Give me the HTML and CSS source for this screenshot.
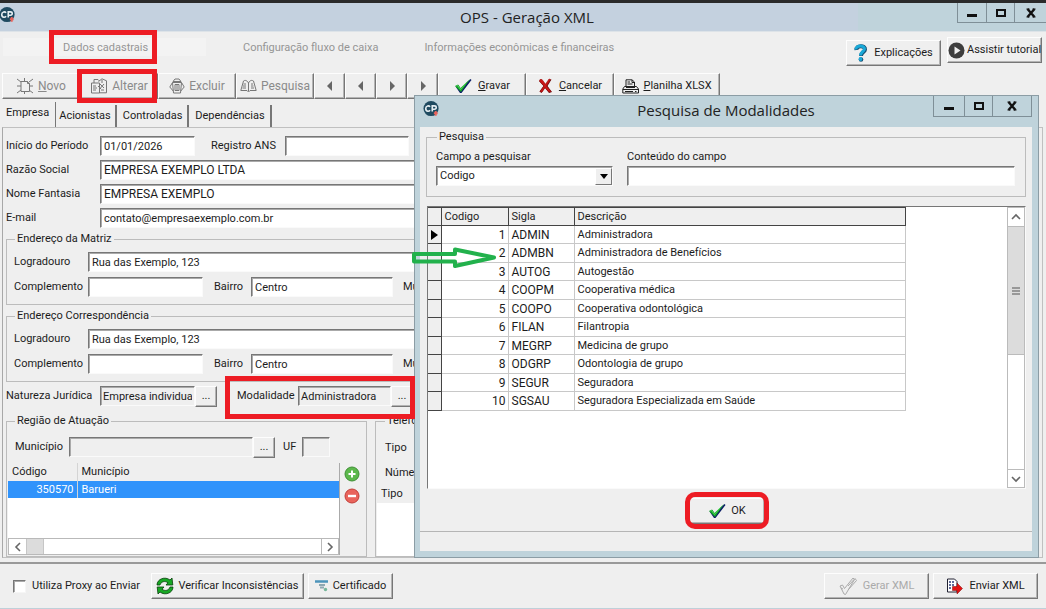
FILE: index.html
```html
<!DOCTYPE html>
<html lang="pt-BR">
<head>
<meta charset="utf-8">
<title>OPS - Geração XML</title>
<link rel="stylesheet" href="styles.css">
</head>
<body>
<svg class="defs" width="0" height="0" aria-hidden="true">
  <symbol id="logo" viewBox="0 0 18 18">
    <circle cx="8.500" cy="8" r="8" fill="#1f4a60"/>
    <path d="M7.500 6.200C6.800 5.300 5.800 5 4.900 5.200 3.500 5.500 2.900 6.700 2.900 8s.8 2.700 2.200 2.800c1 .1 1.800-.3 2.400-1M9.800 11V5.200h2.200c2.700 0 2.700 3.500 0 3.500H9.800" fill="none" stroke="#e6eef2" stroke-width="1.700"/>
    <path d="M13.500 10.500v5M11.500 13h4" stroke="#e9635b" stroke-width="2"/>
  </symbol>
  <symbol id="check" viewBox="0 0 18 16">
    <path d="M1.500 8.500l3-1.200 2.200 3.500L16.500 1 17.500 2 7.500 15H6z" fill="#0a1c66"/>
    <path d="M1 8l3-1.500 2.500 3.500L16 1 7 14z" fill="#14a428"/>
    <path d="M2.500 8l1.200-.5L6.500 11.500 12 5" fill="none" stroke="#51d85c"/>
  </symbol>
  <symbol id="min" viewBox="0 0 12 12"><path d="M1 8.500h10" stroke="#111" stroke-width="3"/></symbol>
  <symbol id="max" viewBox="0 0 12 12"><path d="M2 3h8v6H2z" fill="none" stroke="#111" stroke-width="2"/></symbol>
  <symbol id="close" viewBox="0 0 12 12"><path d="M2.500 2l7 8M9.500 2l-7 8" stroke="#111" stroke-width="2.400"/><path d="M1.500 2h3M7.500 2h3M1.500 10h3M7.500 10h3" stroke="#111" stroke-width="1.200"/></symbol>
  <symbol id="chev-left" viewBox="0 0 10 10"><path d="M7 1L3 5l4 4" fill="none" stroke="#666" stroke-width="1.600"/></symbol>
  <symbol id="chev-right" viewBox="0 0 10 10"><path d="M3 1l4 4-4 4" fill="none" stroke="#666" stroke-width="1.600"/></symbol>
  <symbol id="chev-up" viewBox="0 0 10 10"><path d="M1 7l4-4 4 4" fill="none" stroke="#666" stroke-width="1.600"/></symbol>
  <symbol id="chev-down" viewBox="0 0 10 10"><path d="M1 3l4 4 4-4" fill="none" stroke="#666" stroke-width="1.600"/></symbol>
  <symbol id="tri-left" viewBox="0 0 8 10"><path d="M6 0v10L1 5z" fill="#666"/></symbol>
  <symbol id="tri-right" viewBox="0 0 8 10"><path d="M2 0v10l5-5z" fill="#666"/></symbol>
</svg>

<div class="window">
  <header class="titlebar">
    <svg class="logo"><use href="#logo"/></svg>
    <h1 class="title">OPS - Geração XML</h1>
    <div class="controls">
      <button aria-label="Minimizar"><svg><use href="#min"/></svg></button>
      <button aria-label="Maximizar"><svg><use href="#max"/></svg></button>
      <button aria-label="Fechar"><svg><use href="#close"/></svg></button>
    </div>
  </header>

  <div class="topnav">
    <nav class="sections">
      <a class="section current" href="#dados">Dados cadastrais</a>
      <a class="section" href="#fluxo">Configuração fluxo de caixa</a>
      <a class="section" href="#info">Informações econômicas e financeiras</a>
    </nav>
    <div class="help">
      <button class="btn explain">
        <svg width="14" height="18" viewBox="0 0 14 18"><path d="M2.500 6C2 1 11.500 1 11 5.500c-.2 2.500-4 3-4 6.500" fill="none" stroke="#174f72" stroke-width="4"/><path d="M2 5.500C1.500.8 11 .8 10.500 5c-.2 2.500-4 3-4 6.500" fill="none" stroke="#19a9d8" stroke-width="3"/><circle cx="7" cy="15.500" r="2.300" fill="#174f72"/><circle cx="6.500" cy="15" r="1.900" fill="#19a9d8"/></svg>
        Explicações
      </button>
      <button class="btn tutorial">
        <svg width="17" height="17" viewBox="0 0 17 17"><circle cx="8.500" cy="8.500" r="8" fill="#3d3d3d"/><path d="M6.500 4.500v8l6-4z" fill="#eee"/></svg>
        Assistir tutorial
      </button>
    </div>
  </div>

  <div class="toolbar" role="toolbar">
    <button class="btn tool" disabled>
      <svg width="18" height="16" viewBox="0 0 18 16" fill="none" stroke="#777"><path d="M5 3.500h6.500v2h2v8H5zM1 1l4 3M17 1l-4 3M1 15l4-3M17 15l-4-3M8.500 0v3M8.500 14v2M1 8h4M14 8h3M11 3.500l2.500 2"/></svg>
      <span><u>N</u>ovo</span>
    </button>
    <button class="btn tool" disabled>
      <svg width="18" height="16" viewBox="0 0 18 16" fill="none" stroke="#777"><path d="M4 5V1.500h4L9.500 3M1.500 5h8v10h-8zM3 8h3M3 10h4M3 12h3M8.500 3.500L12 .8l4.500 2v12H9.500M10 6l4 4M14 6l-3.500 4M12 2v3M11 12h3M8 8l3 3"/></svg>
      <span>Alterar</span>
    </button>
    <button class="btn tool" disabled>
      <svg width="16" height="16" viewBox="0 0 16 16" fill="none" stroke="#777"><path d="M4 3.500L6 1h4l2 2.500zM3.500 4.500h9l-1 10.500h-7zM3.500 4.500L.8 9l3.400 4M12.500 4.500L15.200 9l-3.400 4M6 6.500v6h4v-6zM8 6.500v6"/></svg>
      <span>Excluir</span>
    </button>
    <button class="btn tool" disabled>
      <svg width="17" height="14" viewBox="0 0 17 14" fill="none" stroke="#777"><path d="M8.500 4C7 1 4.500 1 3.500 2L.8 11.500H7L8.500 13l1.500-1.500h6.200L13.500 2C12 1 10 1 8.500 4zM8.500 4v8M3.500 5H6M3 7h3M2.500 9H6M11 5h2M11 7h2.500M11 9h3"/></svg>
      <span>Pesquisa</span>
    </button>
    <button class="btn step" aria-label="Primeiro"><svg width="8" height="10"><use href="#tri-left"/></svg></button>
    <button class="btn step" aria-label="Anterior"><svg width="8" height="10"><use href="#tri-left"/></svg></button>
    <button class="btn step" aria-label="Próximo"><svg width="8" height="10"><use href="#tri-right"/></svg></button>
    <button class="btn step" aria-label="Último"><svg width="8" height="10"><use href="#tri-right"/></svg></button>
    <button class="btn save"><svg width="18" height="16"><use href="#check"/></svg><span><u>G</u>ravar</span></button>
    <button class="btn save">
      <svg width="15" height="16" viewBox="0 0 15 16"><path d="M3 1.500l4.500 5 4-5h2L9.500 8l4.500 6-3 1-4-5-3.500 5-2-1.500L5.500 8 1 3z" fill="#5d0909"/><path d="M2 1.500h2l3.500 4.700L11 1l1.500.5L8.500 8l4.500 5.500-2 .5-4-4.500L4 14l-2-.5L6 8 1.500 3z" fill="#cb1717" stroke="#a51010" stroke-width=".6"/></svg>
      <span><u>C</u>ancelar</span>
    </button>
    <button class="btn sheet">
      <svg width="17" height="15" viewBox="0 0 17 15" fill="none" stroke="#222"><path d="M4 7V.8h6L12.500 3v4M10 1v2.500h2.500M5.500 3H8M5.500 5h5M2.500 7.500h12l2 2.500v4H.8v-4zM1 10.500h15M3 12.500h8M13 12.500h1.500M4 8.500h9"/></svg>
      <span><u>P</u>lanilha XLSX</span>
    </button>
  </div>

  <div class="tabs" role="tablist">
    <button class="tab active" role="tab">Empresa</button>
    <button class="tab" role="tab">Acionistas</button>
    <button class="tab" role="tab">Controladas</button>
    <button class="tab" role="tab">Dependências</button>
  </div>

  <main class="panel">
    <div class="row">
      <label class="lead" for="inicio">Início do Período</label>
      <input class="field w-date" id="inicio" value="01/01/2026">
      <label class="ans" for="ans">Registro ANS</label>
      <input class="field w-ans" id="ans">
    </div>
    <div class="row"><label class="lead" for="razao">Razão Social</label><input class="field grow caps" id="razao" value="EMPRESA EXEMPLO LTDA"></div>
    <div class="row"><label class="lead" for="fantasia">Nome Fantasia</label><input class="field grow caps" id="fantasia" value="EMPRESA EXEMPLO"></div>
    <div class="row"><label class="lead" for="email">E-mail</label><input class="field grow" id="email" value="contato@empresaexemplo.com.br"></div>

    <fieldset class="group">
      <legend>Endereço da Matriz</legend>
      <div class="row"><label class="sub" for="log1">Logradouro</label><input class="field grow" id="log1" value="Rua das Exemplo, 123"></div>
      <div class="row">
        <label class="sub" for="comp1">Complemento</label><input class="field w-comp" id="comp1">
        <label class="district" for="bairro1">Bairro</label><input class="field w-bairro" id="bairro1" value="Centro">
        <label class="city" for="mun1">Município</label><input class="field grow" id="mun1">
      </div>
    </fieldset>
    <fieldset class="group">
      <legend>Endereço Correspondência</legend>
      <div class="row"><label class="sub" for="log2">Logradouro</label><input class="field grow" id="log2" value="Rua das Exemplo, 123"></div>
      <div class="row">
        <label class="sub" for="comp2">Complemento</label><input class="field w-comp" id="comp2">
        <label class="district" for="bairro2">Bairro</label><input class="field w-bairro" id="bairro2" value="Centro">
        <label class="city" for="mun2">Município</label><input class="field grow" id="mun2">
      </div>
    </fieldset>

    <div class="row">
      <label class="lead" for="natureza">Natureza Jurídica</label>
      <input class="field flat w-date" id="natureza" value="Empresa individua" readonly><button class="btn dots" aria-label="Escolher natureza">...</button>
      <div class="modality">
        <label class="mod-label" for="modalidade">Modalidade</label>
        <input class="field flat w-date" id="modalidade" value="Administradora" readonly><button class="btn dots" aria-label="Escolher modalidade">...</button>
      </div>
    </div>

    <div class="lower">
      <fieldset class="group region">
        <legend>Região de Atuação</legend>
        <div class="row">
          <label class="mun-label" for="municipio">Município</label>
          <input class="field flat w-mun" id="municipio" readonly><button class="btn dots" aria-label="Escolher município">...</button>
          <label class="uf" for="uf">UF</label><input class="field flat w-uf" id="uf" readonly>
        </div>
        <div class="region-body">
          <div class="city-list">
            <table class="cities">
              <thead><tr><th class="code">Código</th><th>Município</th></tr></thead>
              <tbody><tr><td class="code">350570</td><td>Barueri</td></tr></tbody>
            </table>
            <div class="hscroll">
              <button aria-label="Rolar à esquerda"><svg width="10" height="10"><use href="#chev-left"/></svg></button>
              <span class="hthumb"></span>
              <button aria-label="Rolar à direita"><svg width="10" height="10"><use href="#chev-right"/></svg></button>
            </div>
          </div>
          <div class="round-btns">
            <button class="round" aria-label="Adicionar"><svg width="16" height="16" viewBox="0 0 16 16"><circle cx="8" cy="8" r="7" fill="#5cb84c" stroke="#3f8f35"/><path d="M8 4.500v7M4.500 8h7" stroke="#fff" stroke-width="2"/></svg></button>
            <button class="round" aria-label="Remover"><svg width="16" height="16" viewBox="0 0 16 16"><circle cx="8" cy="8" r="7" fill="#e9645c" stroke="#c23f39"/><path d="M4 8h8" stroke="#fff" stroke-width="2.400"/></svg></button>
          </div>
        </div>
      </fieldset>
      <fieldset class="group phones">
        <legend>Telefone</legend>
        <div class="phone-row"><label for="tipo">Tipo</label><input class="field grow" id="tipo"></div>
        <div class="phone-row"><label for="numero">Número</label><input class="field grow" id="numero"></div>
        <div class="phone-list"><table class="phone-table"><thead><tr><th>Tipo</th></tr></thead></table></div>
      </fieldset>
    </div>
  </main>

  <footer class="footer">
    <label class="proxy"><input type="checkbox" class="check"> Utiliza Proxy ao Enviar</label>
    <button class="btn verify">
      <svg width="18" height="18" viewBox="0 0 18 18"><g stroke="#083d0b" stroke-width=".8" fill="#18a824"><path d="M1 8C1 2 9-1 14 3l2-2 .8 7H10l2-2.200C9 3.500 5 4.500 4 8z"/><path d="M17 10c0 6-8 9-13 5l-2 2-.8-7H8l-2 2.200c3 2.300 7 1.300 8-2.200z"/></g></svg>
      Verificar Inconsistências
    </button>
    <button class="btn cert">
      <svg width="14" height="12" viewBox="0 0 14 12"><path d="M0 1.500h13" stroke="#4d94bb" stroke-width="2.500"/><path d="M4 5h6M5 7.500h4" stroke="#8fa8b2" stroke-width="2"/><circle cx="10.500" cy="9.500" r="1.700" fill="#76b69a"/></svg>
      Certificado
    </button>
    <span class="spacer"></span>
    <button class="btn end pale" disabled>
      <svg width="18" height="18" viewBox="0 0 18 18" fill="none" stroke="#aaa"><path d="M1 9l2.500-1 2 3.500L14 1l1.500 1.500L6.500 17.500 5 17zM9 9l7-7.500 1.500 2L9 13M2 11l2 1"/></svg>
      Gerar XML
    </button>
    <button class="btn end">
      <svg width="17" height="16" viewBox="0 0 17 16"><path d="M1.500 1h7L11 3.500V14H1.500z" fill="#fff" stroke="#223"/><path d="M3 4h2M3 7h2M3 10h2M6 4h2M6 7h2" stroke="#2c3d7a" stroke-width="1.500"/><path d="M6.500 8.500H11V5l5.500 5.500L11 16v-3.500H6.500z" fill="#e31313" stroke="#7c0b0b" stroke-width=".5"/></svg>
      Enviar XML
    </button>
  </footer>

  <section class="dialog" role="dialog" aria-labelledby="dlg-title">
    <header class="dlg-bar">
      <svg class="logo"><use href="#logo"/></svg>
      <h2 class="title" id="dlg-title">Pesquisa de Modalidades</h2>
      <div class="controls dlg-controls">
        <button aria-label="Minimizar"><svg><use href="#min"/></svg></button>
        <button aria-label="Maximizar"><svg><use href="#max"/></svg></button>
        <button aria-label="Fechar"><svg><use href="#close"/></svg></button>
      </div>
    </header>
    <div class="dlg-body">
      <fieldset class="group search">
        <legend>Pesquisa</legend>
        <div class="search-col">
          <label for="campo">Campo a pesquisar</label>
          <div class="combo">
            <select id="campo"><option>Codigo</option></select>
            <span class="combo-arrow"><svg width="8" height="5" viewBox="0 0 8 5"><path d="M0 0h8L4 5z" fill="#000"/></svg></span>
          </div>
        </div>
        <div class="search-col">
          <label for="conteudo">Conteúdo do campo</label>
          <input class="field" id="conteudo">
        </div>
      </fieldset>
      <div class="grid">
        <div class="grid-view">
          <table class="results">
            <thead><tr><th class="mark"></th><th class="num">Codigo</th><th class="sigla">Sigla</th><th>Descrição</th></tr></thead>
            <tbody>
              <tr><td class="mark"><svg width="7" height="10" viewBox="0 0 7 10"><path d="M0 0v10l7-5z"/></svg></td><td class="num">1</td><td class="caps">ADMIN</td><td>Administradora</td></tr>
              <tr><td class="mark"></td><td class="num">2</td><td class="caps">ADMBN</td><td>Administradora de Benefícios</td></tr>
              <tr><td class="mark"></td><td class="num">3</td><td class="caps">AUTOG</td><td>Autogestão</td></tr>
              <tr><td class="mark"></td><td class="num">4</td><td class="caps">COOPM</td><td>Cooperativa médica</td></tr>
              <tr><td class="mark"></td><td class="num">5</td><td class="caps">COOPO</td><td>Cooperativa odontológica</td></tr>
              <tr><td class="mark"></td><td class="num">6</td><td class="caps">FILAN</td><td>Filantropia</td></tr>
              <tr><td class="mark"></td><td class="num">7</td><td class="caps">MEGRP</td><td>Medicina de grupo</td></tr>
              <tr><td class="mark"></td><td class="num">8</td><td class="caps">ODGRP</td><td>Odontologia de grupo</td></tr>
              <tr><td class="mark"></td><td class="num">9</td><td class="caps">SEGUR</td><td>Seguradora</td></tr>
              <tr><td class="mark"></td><td class="num">10</td><td class="caps">SGSAU</td><td>Seguradora Especializada em Saúde</td></tr>
            </tbody>
          </table>
        </div>
        <div class="vscroll">
          <button aria-label="Rolar para cima"><svg width="10" height="10"><use href="#chev-up"/></svg></button>
          <span class="vthumb"><svg width="8" height="8" viewBox="0 0 8 8"><path d="M0 1h8M0 4h8M0 7h8" stroke="#555"/></svg></span>
          <button class="down" aria-label="Rolar para baixo"><svg width="10" height="10"><use href="#chev-down"/></svg></button>
        </div>
      </div>
      <div class="actions">
        <button class="btn ok"><svg width="18" height="16"><use href="#check"/></svg>OK</button>
      </div>
      <div class="status"></div>
    </div>
  </section>

  <span class="callout callout-data"></span>
  <span class="callout callout-edit"></span>
  <span class="callout callout-mod"></span>
  <svg class="arrow" width="86" height="22" viewBox="0 0 86 22"><path d="M2 7H43V2.500L82 10.500 43 19V14.500H2z" fill="none" stroke="#22b14c" stroke-width="4" stroke-linejoin="round"/></svg>
</div>
</body>
</html>
```

FILE: styles.css
```css
* { box-sizing: border-box; }
body {
  margin: 0;
  background: #efefef;
  color: #1c1c1c;
  font: 11px/14px Roboto, "Liberation Sans", sans-serif;
}
button, input, select { font: inherit; color: inherit; margin: 0; border-radius: 0; }
button { padding: 0; }
.defs { position: absolute; }

.window {
  position: relative;
  display: flex;
  flex-direction: column;
  min-height: 100vh;
  border-top: 3px solid #2a2a2a;
  border-bottom: 2px solid #bfd0d9;
  overflow: hidden;
}

/* Title bars */
.titlebar, .dlg-bar { position: relative; display: flex; justify-content: center; }
.titlebar { height: 29px; padding-left: 8px; background: linear-gradient(90deg, #c4d1df 0 82%, #bfd3db 82%); border-bottom: 1px solid #dde3e8; }
.title { margin: 0; font: 15px/28px "Open Sans", "Noto Sans", sans-serif; color: #222; }
.logo { position: absolute; left: -1px; top: 4px; width: 17px; height: 17px; }
.controls { position: absolute; right: 0; top: 0; display: flex; border: 1px solid #7f8f97; border-top: 0; border-right: 0; }
.controls button {
  display: flex; align-items: center; justify-content: center;
  width: 28px; height: 19px; border: 0; border-left: 1px solid #7f8f97; background: #bfd3db;
}
.controls button:first-child { border-left: 0; }
.controls button:last-child { width: 32px; }
.controls svg { width: 12px; height: 12px; }

/* Raised buttons */
.btn {
  display: flex; align-items: center; justify-content: center; gap: 4px;
  border: 1px solid; border-color: #fdfdfd #777 #777 #fdfdfd;
  box-shadow: inset -1px -1px #b4b4b4;
  background: #efefef; white-space: nowrap;
}
.btn:disabled { color: #8a8a8a; }
.btn svg { flex: none; }

/* Section links */
.topnav { display: flex; justify-content: space-between; height: 41px; padding: 5px 4px 0 3px; }
.sections { display: flex; padding-top: 1px; }
.section { height: 18px; line-height: 20px; color: #959595; text-decoration: none; padding-right: 46px; white-space: nowrap; }
.section.current { width: 203px; margin-right: 37px; padding: 0 0 0 60px; background: #f3f3f3; }
.help { display: flex; gap: 6px; }
.help .btn { width: 95px; height: 26px; }
.help .explain { margin-top: 3px; gap: 6px; }
.help .tutorial { gap: 2px; }

.toolbar { display: flex; height: 26px; padding-left: 2px; font-size: 12px; }
.tool { width: 78px; }
.step { width: 31px; }
.save { width: 88px; gap: 6px; }
.sheet { width: 106px; }
.save, .sheet { font-size: 11px; }

/* Page tabs */
.tabs { display: flex; align-items: flex-end; height: 28px; }
.tab { height: 22px; padding: 0 4px 0 3px; border: 0; border-right: 2px solid #777; background: #efefef; }
.tab:nth-child(n+3) { padding: 0 5px 0 6px; }
.tab.active { height: 25px; padding: 0 6px 3px; border-right-width: 1px; }

.panel {
  flex: 1;
  display: flex; flex-direction: column; gap: 4px;
  margin: 0 3px 4px 2px; padding: 8px 3px 0;
  border: 1px solid #c0c0c0; border-left-color: #a8a8a8;
  min-width: 0;
}
.row { display: flex; align-items: center; height: 20px; }
.field {
  height: 20px; min-width: 0; padding: 0 2px 0 3px;
  border: 1px solid; border-color: #777 #fafafa #fafafa #777;
  box-shadow: inset 1px 1px #aaa;
  background: #fff; outline: 0;
}
.field.flat { background: #efefef; padding-left: 2px; }
.grow { flex: 1; }
.caps { font-size: 12px; }
.lead { width: 94px; white-space: nowrap; }
.w-date { width: 95px; }
.ans { width: 90px; padding-left: 16px; white-space: nowrap; }
.w-ans { width: 124px; }

.group { min-width: 0; margin: 0; padding: 6px 0 7px 7px; border: 1px solid #bcbcbc; }
.group legend { padding: 0 2px; margin-left: 1px; line-height: 14px; }
.group .row + .row { margin-top: 5px; }
.sub { width: 74px; }
.w-comp { width: 115px; }
.district { width: 48px; padding-left: 11px; }
.w-bairro { width: 142px; }
.city { padding: 0 10px; }

.dots { width: 22px; height: 21px; flex: none; }
.modality { display: flex; align-items: center; padding-left: 20px; }
.mod-label { width: 61px; }
.modality .w-date { width: 93px; }

.lower { display: flex; gap: 8px; flex: 1; padding-top: 4px; }
.region { width: 361px; display: flex; flex-direction: column; padding: 9px 3px 1px 1px; }
.region > .row { flex: none; padding-left: 7px; }
.region legend { margin-left: 7px; }
.mun-label { width: 54px; }
.w-mun { width: 184px; }
.uf { width: 27px; padding-left: 8px; }
.w-uf { width: 28px; }
.region-body { display: flex; margin-top: 6px; gap: 4px; }
.city-list { width: 332px; height: 92px; display: flex; flex-direction: column; justify-content: space-between; background: #fff; border-right: 1px solid #aaa; }
.cities, .results, .phone-table { border-collapse: collapse; table-layout: fixed; width: 100%; }
.cities th, .cities td { height: 18px; padding: 0 4px; text-align: left; font-weight: 400; background: #efefef; }
.cities th.code, .cities td.code { width: 69px; border-right: 1px solid #d4d4d4; }
.cities td { height: 17px; background: #3093fb; color: #fff; }
.cities td.code { text-align: right; padding-right: 3px; }
.hscroll { display: flex; height: 17px; border: 1px solid #b9b9b9; }
.hscroll button { display: flex; align-items: center; justify-content: center; width: 17px; border: 0; background: #fff; }
.hscroll button:last-child { margin-left: auto; border-left: 1px solid #b9b9b9; }
.hthumb { width: 18px; background: #dcdcdc; border: 1px solid #c6c6c6; border-width: 0 1px; }
.round-btns { display: flex; flex-direction: column; gap: 6px; padding-top: 3px; }
.round { display: flex; width: 16px; height: 16px; border: 0; background: none; }
.phones { flex: 1; display: flex; flex-direction: column; padding: 7px 1px 0; }
.phones legend { margin-left: 8px; }
.phone-row { display: flex; align-items: center; height: 25px; padding-left: 8px; gap: 12px; }
.phone-list { flex: 1; background: #fff; }
.phone-table th { height: 18px; padding: 0 4px; text-align: left; font-weight: 400; background: #efefef; }

/* Footer */
.footer { display: flex; align-items: center; height: 46px; padding: 0 8px 0 13px; border-top: 2px solid #999; }
.proxy { display: flex; align-items: center; gap: 6px; width: 138px; white-space: nowrap; }
.check {
  appearance: none; width: 13px; height: 13px; background: #fff;
  border: 1px solid; border-color: #777 #f6f6f6 #f6f6f6 #777; box-shadow: inset 1px 1px #aaa;
}
.footer .btn { height: 26px; }
.verify { width: 153px; }
.cert { width: 85px; margin-left: 4px; }
.spacer { flex: 1; }
.end { width: 105px; margin-left: 4px; gap: 6px; }
.btn.pale { color: #aaa; }

/* Search dialog */
.dialog {
  position: absolute; left: 414px; right: 7px; top: 92px; bottom: 50px;
  display: flex; flex-direction: column;
  padding: 0 6px 6px 5px;
  border: 1px solid #8c9da5; background: #bfd3db;
}
.dlg-bar { height: 31px; }
.dlg-bar .title { line-height: 29px; }
.dlg-bar .logo { left: 3px; top: 5px; }
.dlg-controls { border-right: 1px solid #7f8f97; }
.dlg-controls button { height: 20px; }
.dlg-controls button:first-child { width: 30px; }
.dlg-controls button:last-child { width: 39px; }
.dlg-body { flex: 1; display: flex; flex-direction: column; padding: 3px 6px 0; background: #efefef; }
.dlg-body .search { display: grid; grid-template-columns: 177px 1fr; gap: 14px; padding: 6px 10px 10px 9px; }
.search-col { display: flex; flex-direction: column; gap: 2px; }
.combo { position: relative; display: flex; height: 20px; border: 1px solid; border-color: #777 #fafafa #fafafa #777; box-shadow: inset 1px 1px #aaa; background: #fff; }
.combo select { appearance: none; flex: 1; border: 0; padding: 0 3px; background: none; outline: 0; }
.combo-arrow {
  position: absolute; right: 0; top: 1px; bottom: 0; width: 17px;
  display: flex; align-items: center; justify-content: center; pointer-events: none;
  background: #efefef; border: 1px solid; border-color: #fff #777 #777 #fff;
}
.grid { flex: 1; display: flex; margin: 9px 0 0 1px; border: 1px solid; border-color: #777 #fafafa #fafafa #777; background: #fff; min-height: 0; }
.grid-view { flex: 1; }
.results { width: 478px; }
.results th, .results td { height: 18px; padding: 0 3px; line-height: 14px; text-align: left; font-weight: 400; border: 1px solid #c8c8c8; }
.results tr:nth-child(even) td { height: 19px; }
.results th { background: #efefef; border-color: #444; }
.results .mark { width: 13px; padding: 0 0 0 3px; background: #efefef; border: 1px solid #444; border-left: 0; }
.results .mark svg { display: block; }
.results th.num { width: 67px; }
.results td.num { text-align: right; padding-right: 2px; font-size: 12px; }
.results .sigla { width: 66px; }
.vscroll { width: 18px; display: flex; flex-direction: column; border: 1px solid #bbb; }
.vscroll button { display: flex; align-items: center; justify-content: center; height: 18px; border: 0; background: #fff; }
.vscroll .down { margin-top: auto; border-top: 1px solid #bbb; }
.vthumb { display: flex; align-items: center; justify-content: center; height: 129px; background: #dcdcdc; border: 1px solid #bbb; border-width: 1px 0; }
.actions { display: flex; justify-content: center; height: 42px; padding: 9px 0 0 2px; }
.ok { position: relative; width: 76px; height: 26px; gap: 5px; }
.ok::after { content: ""; position: absolute; inset: -7px -5px -6px -5px; border: 5px solid #ed1c24; border-radius: 10px; }
.status { height: 20px; margin: 0 -6px; border-top: 1px solid #b5b5b5; }

/* Highlights over the form */
.callout { position: absolute; border: 5px solid #ed1c24; }
.callout-data { left: 49px; top: 27px; width: 108px; height: 34px; }
.callout-edit { left: 77px; top: 66px; width: 80px; height: 34px; }
.callout-mod { left: 225px; top: 373px; width: 190px; height: 43px; }
.arrow { position: absolute; left: 412px; top: 244px; }
```
